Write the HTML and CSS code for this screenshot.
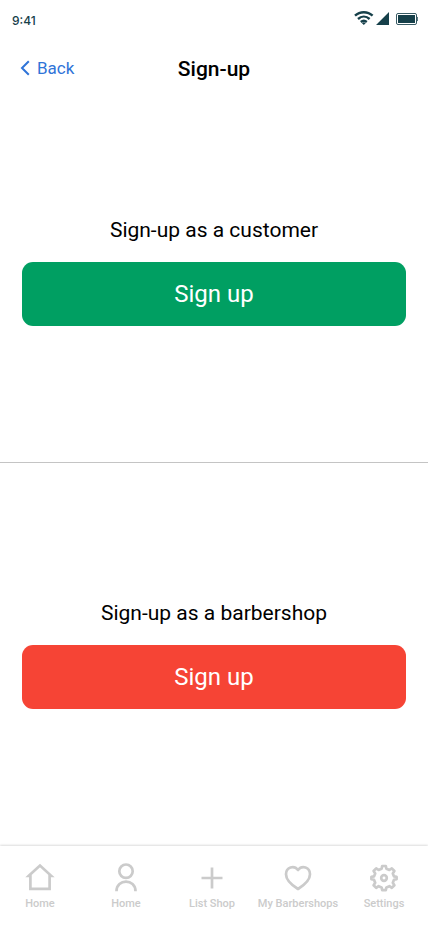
FILE: index.html
```html
<!DOCTYPE html>
<html lang="en">
<head>
<meta charset="utf-8">
<meta name="viewport" content="width=device-width, initial-scale=1">
<title>Sign-up</title>
<link rel="stylesheet" href="styles.css">
</head>
<body>
<div class="screen">
  <div class="status">
    <span class="time">9:41</span>
    <svg class="status-icons" width="64" height="16" viewBox="0 0 64 16" aria-hidden="true">
      <g fill="none" stroke="#16404a" stroke-width="2.400">
        <path d="M1 5.700C6 1 13.600 1 18.600 5.700"/>
        <path d="M4 9c3.500-3.200 8.100-3.200 11.600 0"/>
        <path d="M6.800 12c2-1.600 4-1.600 6 0"/>
      </g>
      <path fill="#16404a" d="M7.800 13c1.300-.9 2.700-.9 4 0l-2 2zM35 2v13H22z"/>
      <rect x="42.500" y="3.500" width="20" height="11" rx="1.500" fill="none" stroke="#16404a" stroke-opacity=".85"/>
      <rect x="44" y="5" width="17" height="8" fill="#16404a"/>
      <path d="M62.500 6.500q1.300.5 1.300 2.500t-1.300 2.500" fill="none" stroke="#16404a" stroke-opacity=".85"/>
    </svg>
  </div>
  <header class="topbar">
    <a class="back" href="#">
      <svg width="10" height="16" viewBox="0 0 10 16" aria-hidden="true"><path d="M8.800 1.200L2 8l6.800 6.800" fill="none" stroke="#2f74d8" stroke-width="2"/></svg>
      Back
    </a>
    <h1 class="title">Sign-up</h1>
  </header>
  <main class="choices">
    <section class="choice">
      <h2 class="choice-title" id="customer">Sign-up as a customer</h2>
      <button class="signup customer" type="button" aria-describedby="customer">Sign up</button>
    </section>
    <section class="choice">
      <h2 class="choice-title" id="barbershop">Sign-up as a barbershop</h2>
      <button class="signup barbershop" type="button" aria-describedby="barbershop">Sign up</button>
    </section>
  </main>
  <nav class="tabs">
    <a class="tab" href="#">
      <svg class="icon" viewBox="0 0 30 30"><path d="M3.800 12.800L15 2.500l11.200 10.300h-1.600v13H5.400v-13z"/></svg>
      Home
    </a>
    <a class="tab" href="#">
      <svg class="icon" viewBox="0 0 30 30"><circle cx="15" cy="8.200" r="6.700"/><path d="M5.500 28.300c0-12.800 19-12.800 19 0"/></svg>
      Home
    </a>
    <a class="tab" href="#">
      <svg class="icon" viewBox="0 0 30 30"><path d="M15 4.500v21M4.500 15h21"/></svg>
      List Shop
    </a>
    <a class="tab" href="#">
      <svg class="icon" viewBox="0 0 30 30"><path stroke-linejoin="round" d="M15 7C11 1.800 3 4 3 11.300 3 17.500 8.500 22 15 26c6.500-4 12-8.500 12-14.700C27 4 19 1.800 15 7z"/></svg>
      My Barbershops
    </a>
    <a class="tab" href="#">
      <svg class="icon" viewBox="0 0 30 30"><path stroke-linejoin="round" d="M13.200 3h3.600l.6 2.800 3 1.200 2.400-1.600 2.600 2.600-1.600 2.400 1.200 3 2.600.4v2.400l-2.600.6-1.200 3 1.600 2.400-2.600 2.600-2.400-1.600-3 1.200-.6 2.800h-3.600l-.6-2.800-3-1.200-2.400 1.600-2.600-2.600 1.600-2.400-1.200-3-2.600-.6v-2.400l2.600-.4 1.200-3-1.600-2.400 2.600-2.600 2.400 1.600 3-1.200z"/><circle cx="15" cy="15" r="2.800"/></svg>
      Settings
    </a>
  </nav>
</div>
</body>
</html>
```
FILE: styles.css
```css
* {
  box-sizing: border-box;
}

body {
  margin: 0;
  background: #fff;
  color: #000;
  font-family: Roboto, "Liberation Sans", sans-serif;
}

a {
  color: inherit;
  text-decoration: none;
}

.screen {
  display: flex;
  flex-direction: column;
  min-height: 100vh;
}

.status {
  display: flex;
  align-items: center;
  justify-content: space-between;
  height: 40px;
  padding: 0 10px 0 12px;
}

.status-icons {
  margin-bottom: 4px;
}

.time {
  color: #16404a;
  font-family: Inter, sans-serif;
  font-size: 12px;
  font-weight: 500;
}

.topbar {
  display: grid;
  grid-template-columns: 1fr auto 1fr;
  align-items: start;
  height: 40px;
  padding: 16px 20px 0;
}

.back {
  display: flex;
  align-items: center;
  gap: 7px;
  color: #2f74d8;
  font-size: 17px;
  line-height: 24px;
}

.title {
  margin: 0;
  font-size: 21px;
  font-weight: 500;
  line-height: 26px;
}

.choices {
  display: grid;
  flex: 1;
  grid-template-rows: 1fr 1fr;
}

.choice {
  display: flex;
  flex-direction: column;
  justify-content: center;
  gap: 20px;
  padding: 0 22px;
}

.choice:first-child {
  box-shadow: inset 0 -1px #c4c4c4;
}

.choice-title {
  margin: 0;
  font-size: 21px;
  font-weight: 400;
  line-height: 24px;
  text-align: center;
}

.signup {
  height: 64px;
  border: 0;
  border-radius: 11px;
  color: #fff;
  font: inherit;
  font-size: 24px;
}

.customer {
  background: #009f62;
}

.barbershop {
  background: #f64435;
}

.tabs {
  display: flex;
  gap: 6px;
  height: 80px;
  padding: 17px 4px 0 0;
  box-shadow: 0 -1px 2px rgba(0, 0, 0, 0.14);
}

.tab {
  display: flex;
  flex: 1 1 0;
  flex-direction: column;
  align-items: center;
  gap: 3px;
  min-width: 0;
  color: #cbcbcb;
  font-size: 11px;
  font-weight: 500;
  line-height: 16px;
  white-space: nowrap;
}

.icon {
  width: 30px;
  height: 30px;
  fill: none;
  stroke: #cbcbcb;
  stroke-width: 2.7;
}
```
